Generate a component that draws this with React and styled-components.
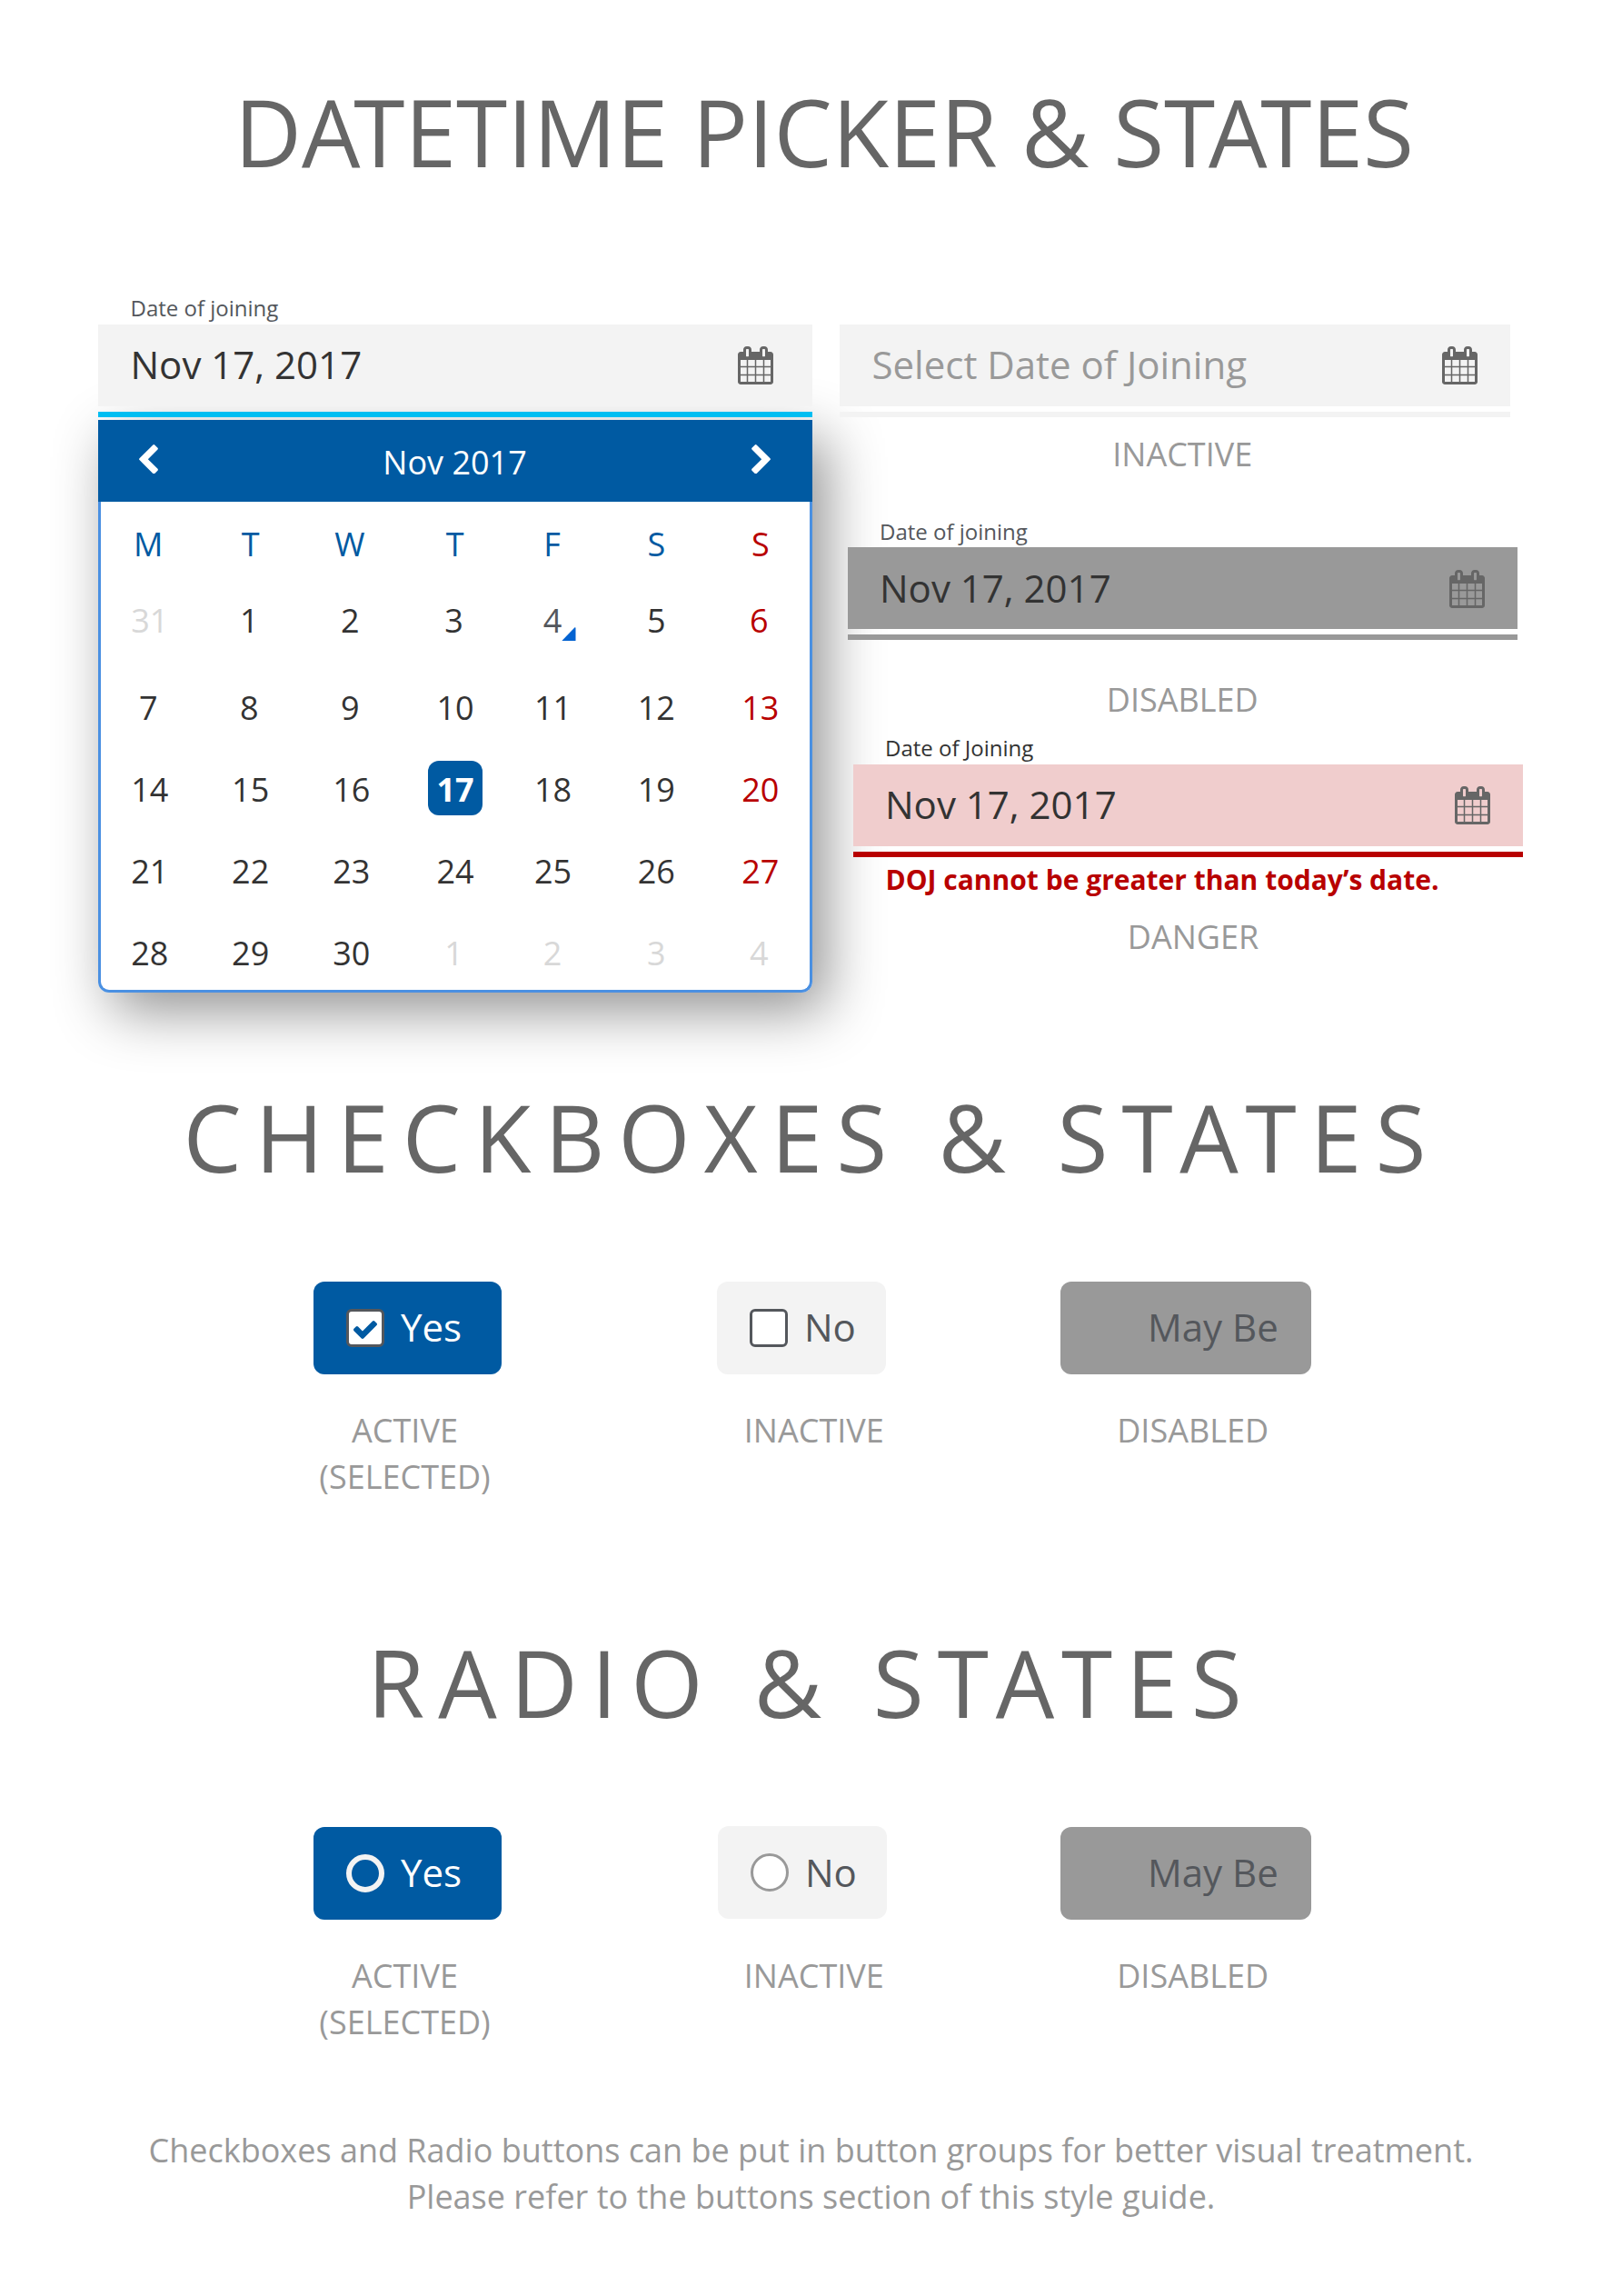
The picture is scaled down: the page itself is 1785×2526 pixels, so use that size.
import React from "react";
import styled, { createGlobalStyle, css } from "styled-components";

const c = {
  blue: "#005aa2",
  cyan: "#00bef2",
  edge: "#4a90e2",
  red: "#b80000",
  pink: "#f0cdcd",
  pale: "#f3f3f3",
  grey: "#999999",
  title: "#666666",
  slate: "#54575c",
  ink: "#333333",
  faint: "#d8d8d8",
};

const GlobalStyle = createGlobalStyle`
  * { box-sizing: border-box; }
  body {
    margin: 0;
    background: #fff;
    font-family: "Open Sans", "Noto Sans", sans-serif;
  }
`;

const Page = styled.main`
  width: 1785px;
  height: 2526px;
  padding-top: 75px;
  overflow: hidden;
  background: #fff;
`;

const Title = styled.h1`
  margin: ${(p) => p.$gap || 0}px 0 0;
  padding-left: ${(p) => p.$indent || 0}px;
  font-size: 102px;
  font-weight: 400;
  line-height: 139px;
  letter-spacing: ${(p) => p.$spacing || 0}px;
  text-align: center;
  white-space: nowrap;
  color: ${c.title};
`;

const Kern = styled.span`
  letter-spacing: ${(p) => p.$spacing - 7.25}px;
`;

const Pickers = styled.section`
  display: flex;
  align-items: flex-start;
  gap: 30px;
  margin-top: 108px;
  padding-left: 108px;
  height: 770px;
`;

const OpenColumn = styled.div`
  width: 786px;
`;

const StateColumn = styled.div`
  width: 752px;
`;

const FieldBlock = styled.div`
  width: ${(p) => p.$width}px;
  margin: ${(p) => p.$gap || 0}px 0 0 ${(p) => p.$indent || 0}px;
`;

const FieldLabel = styled.div`
  height: 35px;
  padding-top: ${(p) => p.$drop || 0}px;
  padding-left: ${(p) => p.$pad}px;
  font-size: 24px;
  line-height: 33px;
  color: ${(p) => p.$color || c.slate};
`;

const FieldBox = styled.div`
  position: relative;
  z-index: 1;
  display: flex;
  justify-content: space-between;
  align-items: flex-start;
  height: 90px;
  padding: ${(p) => p.$drop || 0}px ${(p) => p.$right}px 0 ${(p) => p.$pad}px;
  background: ${(p) => p.$bg};
`;

const FieldValue = styled.span`
  margin-top: 15px;
  font-size: 42px;
  line-height: 57px;
  white-space: nowrap;
  color: ${(p) => p.$color || c.ink};
`;

const FieldLine = styled.div`
  position: relative;
  z-index: 1;
  height: 6px;
  margin-top: 6px;
  background: ${(p) => p.$color};
`;

const CalendarSvg = styled.svg`
  display: block;
  width: 39px;
  height: 42px;
  margin-top: 24px;
  fill: ${c.title};
`;

const StateName = styled.div`
  margin-top: ${(p) => p.$gap}px;
  padding-left: ${(p) => p.$indent || 0}px;
  font-size: 36px;
  line-height: 49px;
  text-align: center;
  color: ${c.grey};
`;

const ErrorText = styled.div`
  margin: 4.2px 0 0 50.5px;
  font-size: 30px;
  font-weight: 700;
  line-height: 41px;
  white-space: nowrap;
  color: ${c.red};
`;

const Calendar = styled.div`
  margin-top: 3px;
  border-radius: 0 0 12px 12px;
  box-shadow: 15px 20px 62px rgba(0, 0, 0, 0.43);
`;

const MonthBar = styled.div`
  display: flex;
  justify-content: space-between;
  align-items: flex-start;
  height: 90px;
  padding: 0 46px 0 45px;
  background: ${c.blue};
`;

const MonthName = styled.span`
  margin-top: 22px;
  font-size: 36px;
  line-height: 49px;
  color: #fff;
`;

const ChevronSvg = styled.svg`
  display: block;
  width: 21px;
  height: 32.4px;
  margin-top: 27px;
  fill: #fff;
  ${(p) => p.$flip && css`transform: scaleX(-1);`}
`;

const Days = styled.div`
  display: grid;
  grid-template-columns: 107.6px 114.2px 108px 120.6px 94.4px 133px 96.2px;
  grid-template-rows: 84px 96px 90px 90px 90px 1fr;
  height: 540px;
  padding-top: 22px;
  border: 3px solid ${c.edge};
  border-top: 0;
  border-radius: 0 0 12px 12px;
  background: #fff;
`;

const Day = styled.div`
  position: relative;
  padding-right: ${(p) => p.$nudge || 0}px;
  font-size: 36px;
  line-height: 49px;
  text-align: center;
  color: ${(p) => p.$color};
`;

const Selected = styled.span`
  display: block;
  width: 60px;
  height: 60px;
  margin: -7px auto 0;
  padding-top: 7px;
  border-radius: 12px;
  font-weight: 700;
  color: #fff;
  background: ${c.blue};
`;

const TodayMark = styled.svg`
  position: absolute;
  top: 31.5px;
  left: calc(50% + 9.7px);
  width: 15.5px;
  height: 15.5px;
  fill: #0563d1;
`;

const Options = styled.section`
  display: grid;
  grid-template-columns: 444px 378px 276px;
  height: 240px;
  margin-top: 90px;
  padding-left: 345px;
`;

const Option = styled.div`
  display: flex;
  flex-direction: column;
  align-items: flex-start;
`;

const Chip = styled.div`
  display: flex;
  align-items: flex-start;
  gap: 18px;
  width: ${(p) => p.$width}px;
  height: 102px;
  margin: ${(p) => (p.$shift ? "-1px 0 1px 1px" : 0)};
  padding-left: 36px;
  border-radius: 12px;
  color: ${(p) => p.$color};
  background: ${(p) => p.$bg};
`;

const ChipText = styled.span`
  margin-top: ${(p) => (p.$shift ? 22 : 21)}px;
  font-size: 42px;
  line-height: 57px;
  white-space: nowrap;
`;

const Mark = styled.span`
  display: flex;
  align-items: center;
  justify-content: center;
  flex: none;
  width: 42px;
  height: 42px;
  margin-top: 30px;
  ${(p) => p.$kind === "box" && css`
    border: 3px solid ${c.slate};
    border-radius: 6px;
    background: #fff;
  `}
  ${(p) => p.$kind === "ring" && css`
    border: 6px solid #f3f3f3;
    border-radius: 50%;
  `}
  ${(p) => p.$kind === "circle" && css`
    border: 3px solid ${c.grey};
    border-radius: 50%;
    background: #fff;
  `}
`;

const CheckSvg = styled.svg`
  display: block;
  width: 26px;
  height: 20px;
  margin-top: 4px;
  fill: ${c.blue};
`;

const OptionState = styled.div`
  width: 200px;
  margin: 36px 0 0 ${(p) => p.$indent}px;
  font-size: 36px;
  line-height: 51px;
  text-align: center;
  color: ${c.grey};
`;

const Note = styled.p`
  margin: 90px 0 0;
  font-size: 36px;
  line-height: 51px;
  text-align: center;
  color: ${c.grey};
`;

// Tightens the A/T pairs, which look too open at display size.
function Heading({ text, gap, indent, spacing = 0 }) {
  const parts = text.split(/(A(?=T)|T(?=A))/);
  return (
    <Title $gap={gap} $indent={indent} $spacing={spacing}>
      {parts.map((part, i) => (i % 2 ? <Kern key={i} $spacing={spacing}>{part}</Kern> : part))}
    </Title>
  );
}

function CalendarIcon() {
  return (
    <CalendarSvg viewBox="0 0 1664 1792">
      <path d="M128 1664h288v-288h-288v288zM480 1664h320v-288h-320v288zM128 1312h288v-320h-288v320zM480 1312h320v-320h-320v320zM128 928h288v-288h-288v288zM864 1664h320v-288h-320v288zM480 928h320v-288h-320v288zM1248 1664h288v-288h-288v288zM864 1312h320v-320h-320v320zM512 448v-288q0-13-9.5-22.5t-22.5-9.5h-64q-13 0-22.5 9.5t-9.5 22.5v288q0 13 9.5 22.5t22.5 9.5h64q13 0 22.5-9.5t9.5-22.5zM1248 1312h288v-320h-288v320zM864 928h320v-288h-320v288zM1248 928h288v-288h-288v288zM1280 448v-288q0-13-9.5-22.5t-22.5-9.5h-64q-13 0-22.5 9.5t-9.5 22.5v288q0 13 9.5 22.5t22.5 9.5h64q13 0 22.5-9.5t9.5-22.5zM1664 384v1280q0 52-38 90t-90 38h-1408q-52 0-90-38t-38-90v-1280q0-52 38-90t90-38h128v-96q0-66 47-113t113-47h64q66 0 113 47t47 113v96h384v-96q0-66 47-113t113-47h64q66 0 113 47t47 113v96h128q52 0 90 38t38 90z" />
    </CalendarSvg>
  );
}

function Chevron({ flip }) {
  return (
    <ChevronSvg viewBox="90 -192 1036 1612" $flip={flip}>
      <path d="M1107 659l-742 742q-19 19-45 19t-45-19l-166-166q-19-19-19-45t19-45l531-531-531-531q-19-19-19-45t19-45l166-166q19-19 45-19t45 19l742 742q19 19 19 45t-19 45z" />
    </ChevronSvg>
  );
}

function Check() {
  return (
    <CheckSvg viewBox="121 334 1550 1188">
      <path d="M1671 566q0 40-28 68l-724 724-136 136q-28 28-68 28t-68-28l-136-136-362-362q-28-28-28-68t28-68l136-136q28-28 68-28t68 28l294 295 656-657q28-28 68-28t68 28l136 136q28 28 28 68z" />
    </CheckSvg>
  );
}

function Field({ label, labelColor, value, valueColor, bg, line, width, gap, indent, drop, pad = 35, right = 36 }) {
  return (
    <FieldBlock $width={width} $gap={gap} $indent={indent}>
      <FieldLabel $pad={pad} $drop={drop} $color={labelColor}>{label}</FieldLabel>
      <FieldBox $bg={bg} $pad={pad} $drop={drop} $right={right}>
        <FieldValue $color={valueColor}>{value}</FieldValue>
        <CalendarIcon />
      </FieldBox>
      <FieldLine $color={line} />
    </FieldBlock>
  );
}

const weekdays = ["M", "T", "W", "T", "F", "S", "S"];
const weeks = [
  [31, 1, 2, 3, 4, 5, 6],
  [7, 8, 9, 10, 11, 12, 13],
  [14, 15, 16, 17, 18, 19, 20],
  [21, 22, 23, 24, 25, 26, 27],
  [28, 29, 30, 1, 2, 3, 4],
];
const headNudge = [3, 0, 4, 1, 2, 0, 0];
const digitNudge = [3, 3, 3, 3, 1, 0, 3];

function dayColor(week, col, day) {
  if ((week === 0 && day > 7) || (week === 4 && day < 8)) return c.faint;
  if (col === 6) return c.red;
  if (day === 4) return c.slate;
  return c.ink;
}

function MonthGrid() {
  return (
    <Days>
      {weekdays.map((d, i) => (
        <Day key={`h${i}`} $color={i === 6 ? c.red : c.blue} $nudge={headNudge[i]}>{d}</Day>
      ))}
      {weeks.map((week, w) =>
        week.map((day, i) => (
          <Day key={`${w}-${i}`} $color={dayColor(w, i, day)} $nudge={day < 10 ? digitNudge[i] : 0}>
            {day === 17 ? <Selected>17</Selected> : day}
            {w === 0 && day === 4 && (
              <TodayMark viewBox="0 0 16 16">
                <path d="M15 0.3Q16 0 16 1V15Q16 16 15 16H1Q0 16 0.6 15.2Z" />
              </TodayMark>
            )}
          </Day>
        ))
      )}
    </Days>
  );
}

function OptionRow({ activeMark, activeIcon, idleMark, shift }) {
  return (
    <Options>
      <Option>
        <Chip $width={207} $bg={c.blue} $color="#fff">
          <Mark $kind={activeMark}>{activeIcon}</Mark>
          <ChipText>Yes</ChipText>
        </Chip>
        <OptionState $indent={0.5}>ACTIVE (SELECTED)</OptionState>
      </Option>
      <Option>
        <Chip $width={186} $bg={c.pale} $color={c.slate} $shift={shift}>
          <Mark $kind={idleMark} />
          <ChipText $shift={shift}>No</ChipText>
        </Chip>
        <OptionState $indent={6.8}>INACTIVE</OptionState>
      </Option>
      <Option>
        <Chip $width={276} $bg={c.grey} $color={c.slate}>
          <Mark />
          <ChipText>May Be</ChipText>
        </Chip>
        <OptionState $indent={45.7}>DISABLED</OptionState>
      </Option>
    </Options>
  );
}

export default function App() {
  return (
    <>
      <GlobalStyle />
      <Page>
        <Heading text="DATETIME PICKER & STATES" indent={29} />
        <Pickers>
          <OpenColumn>
            <Field label="Date of joining" value="Nov 17, 2017" bg={c.pale} line={c.cyan} width={786} pad={35.5} right={43} />
            <Calendar>
              <MonthBar>
                <Chevron flip />
                <MonthName>Nov 2017</MonthName>
                <Chevron />
              </MonthBar>
              <MonthGrid />
            </Calendar>
          </OpenColumn>
          <StateColumn>
            <Field value="Select Date of Joining" valueColor={c.grey} bg={c.pale} line={c.pale} width={738} pad={35.5} />
            <StateName $gap={16} $indent={2.5}>INACTIVE</StateName>
            <Field label="Date of joining" value="Nov 17, 2017" bg={c.grey} line={c.grey} width={737.4} gap={43.3} indent={9} drop={0.6} />
            <StateName $gap={40.7} $indent={2.5}>DISABLED</StateName>
            <Field label="Date of Joining" labelColor={c.ink} value="Nov 17, 2017" bg={c.pink} line={c.red} width={737} gap={11.8} indent={15} />
            <ErrorText>DOJ cannot be greater than today’s date.</ErrorText>
            <StateName $gap={18} $indent={26}>DANGER</StateName>
          </StateColumn>
        </Pickers>
        <Heading text="CHECKBOXES & STATES" gap={89} indent={1} spacing={15} />
        <OptionRow activeMark="box" activeIcon={<Check />} idleMark="box" />
        <Heading text="RADIO & STATES" gap={131} indent={1} spacing={15} />
        <OptionRow activeMark="ring" idleMark="circle" shift />
        <Note>
          Checkboxes and Radio buttons can be put in button groups for better visual treatment.
          <br />
          Please refer to the buttons section of this style guide.
        </Note>
      </Page>
    </>
  );
}
